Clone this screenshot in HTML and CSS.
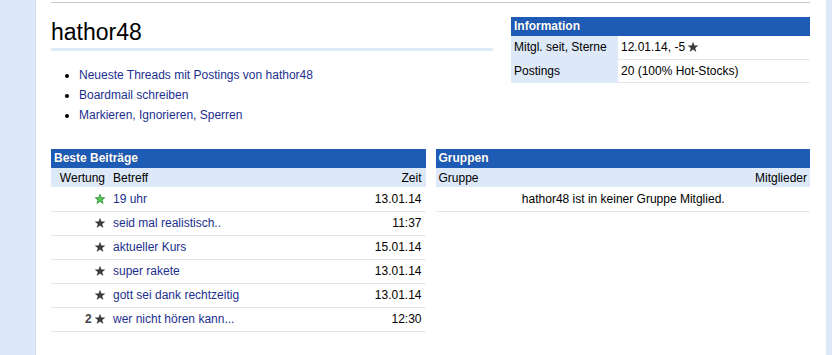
FILE: index.html
```html
<!DOCTYPE html>
<html lang="de">
<head>
    <meta charset="UTF-8">
    <title>hathor48 - Profil</title>
    <link rel="stylesheet" href="styles.css">
</head>
<body>
    <div class="page">
        <div class="rail rail-left"></div>

        <div class="content">
            <div class="rule"></div>

            <div class="top">
                <div class="profile">
                    <h1>hathor48</h1>
                    <ul class="actions">
                        <li><a href="#">Neueste Threads mit Postings von hathor48</a></li>
                        <li><a href="#">Boardmail schreiben</a></li>
                        <li><a href="#">Markieren, Ignorieren, Sperren</a></li>
                    </ul>
                </div>

                <!-- Information -->
                <div class="box box-info">
                    <div class="box-title">Information</div>
                    <table class="info-table">
                        <tr>
                            <td class="label">Mitgl. seit, Sterne</td>
                            <td>12.01.14, -5 <svg class="star" viewBox="0 0 10 10"><path d="M5 0.4 L6.25 3.7 L9.7 3.75 L6.95 5.9 L7.95 9.4 L5 7.35 L2.05 9.4 L3.05 5.9 L0.3 3.75 L3.75 3.7 Z"/></svg></td>
                        </tr>
                        <tr>
                            <td class="label">Postings</td>
                            <td>20 (100% Hot-Stocks)</td>
                        </tr>
                    </table>
                </div>
            </div>

            <div class="bottom">
                <!-- Beste Beitraege -->
                <div class="box">
                    <div class="box-title">Beste Beiträge</div>
                    <table class="list-table">
                        <tr class="head">
                            <td class="rating">Wertung</td>
                            <td>Betreff</td>
                            <td class="time">Zeit</td>
                        </tr>
                        <tr>
                            <td class="rating"><svg class="star star-green" viewBox="0 0 10 10"><path d="M5 0.4 L6.25 3.7 L9.7 3.75 L6.95 5.9 L7.95 9.4 L5 7.35 L2.05 9.4 L3.05 5.9 L0.3 3.75 L3.75 3.7 Z"/></svg></td>
                            <td><a href="#">19 uhr</a></td>
                            <td class="time">13.01.14</td>
                        </tr>
                        <tr>
                            <td class="rating"><svg class="star" viewBox="0 0 10 10"><path d="M5 0.4 L6.25 3.7 L9.7 3.75 L6.95 5.9 L7.95 9.4 L5 7.35 L2.05 9.4 L3.05 5.9 L0.3 3.75 L3.75 3.7 Z"/></svg></td>
                            <td><a href="#">seid mal realistisch..</a></td>
                            <td class="time">11:37</td>
                        </tr>
                        <tr>
                            <td class="rating"><svg class="star" viewBox="0 0 10 10"><path d="M5 0.4 L6.25 3.7 L9.7 3.75 L6.95 5.9 L7.95 9.4 L5 7.35 L2.05 9.4 L3.05 5.9 L0.3 3.75 L3.75 3.7 Z"/></svg></td>
                            <td><a href="#">aktueller Kurs</a></td>
                            <td class="time">15.01.14</td>
                        </tr>
                        <tr>
                            <td class="rating"><svg class="star" viewBox="0 0 10 10"><path d="M5 0.4 L6.25 3.7 L9.7 3.75 L6.95 5.9 L7.95 9.4 L5 7.35 L2.05 9.4 L3.05 5.9 L0.3 3.75 L3.75 3.7 Z"/></svg></td>
                            <td><a href="#">super rakete</a></td>
                            <td class="time">13.01.14</td>
                        </tr>
                        <tr>
                            <td class="rating"><svg class="star" viewBox="0 0 10 10"><path d="M5 0.4 L6.25 3.7 L9.7 3.75 L6.95 5.9 L7.95 9.4 L5 7.35 L2.05 9.4 L3.05 5.9 L0.3 3.75 L3.75 3.7 Z"/></svg></td>
                            <td><a href="#">gott sei dank rechtzeitig</a></td>
                            <td class="time">13.01.14</td>
                        </tr>
                        <tr>
                            <td class="rating"><b class="count">2</b> <svg class="star" viewBox="0 0 10 10"><path d="M5 0.4 L6.25 3.7 L9.7 3.75 L6.95 5.9 L7.95 9.4 L5 7.35 L2.05 9.4 L3.05 5.9 L0.3 3.75 L3.75 3.7 Z"/></svg></td>
                            <td><a href="#">wer nicht hören kann...</a></td>
                            <td class="time">12:30</td>
                        </tr>
                    </table>
                </div>

                <!-- Gruppen -->
                <div class="box">
                    <div class="box-title">Gruppen</div>
                    <table class="list-table">
                        <tr class="head">
                            <td class="group">Gruppe</td>
                            <td class="members">Mitglieder</td>
                        </tr>
                        <tr>
                            <td class="empty" colspan="2">hathor48 ist in keiner Gruppe Mitglied.</td>
                        </tr>
                    </table>
                </div>
            </div>
        </div>

        <div class="rail rail-right"></div>
    </div>
</body>
</html>
```

FILE: styles.css
```css
* {
    margin: 0;
    padding: 0;
    box-sizing: border-box;
}

body {
    font-family: 'Liberation Sans', Arial, sans-serif;
    font-size: 12px;
    color: #000;
    background-color: #fff;
}

a {
    color: #1c2f8e;
    text-decoration: none;
}

.page {
    display: flex;
    min-height: 355px;
}

.rail {
    background-color: #dde8f8;
}

.rail-left {
    width: 36px;
    border-right: 1px solid #d2dff2;
}

.rail-right {
    width: 6px;
}

.content {
    flex: 1;
    padding: 0 16px 0 15px;
}

.rule {
    margin-top: 2px;
    border-top: 1px solid #c8c8c8;
}

.top {
    display: flex;
    gap: 18px;
    margin-top: 14px;
}

.profile {
    flex: 1;
}

h1 {
    font-size: 23px;
    font-weight: normal;
    line-height: 28px;
    padding: 1px 0 2px;
    border-bottom: 3px solid #dde8f8;
}

.actions {
    margin-top: 14px;
    padding-left: 28px;
}

.actions li {
    line-height: 20px;
}

.box-info {
    width: 299px;
}

.box-title {
    background-color: #1e5bb5;
    color: #fff;
    font-weight: bold;
    height: 19px;
    line-height: 18px;
    padding: 0 3px;
    text-shadow: 0 0 1px rgba(0, 0, 0, 0.35);
}

table {
    width: 100%;
    border-collapse: collapse;
}

td {
    height: 24px;
    padding: 0 3px;
    border-bottom: 1px solid #e6e6e6;
    vertical-align: middle;
    white-space: nowrap;
}

.info-table td {
    height: 23px;
}

.info-table .label {
    width: 107px;
    background-color: #dde8f8;
    border-bottom-color: #dde8f8;
}

.bottom {
    display: flex;
    gap: 10px;
    margin-top: 24px;
}

.bottom .box {
    flex: 1;
}

.list-table .head td {
    height: 19px;
    background-color: #dde8f8;
    border-bottom: none;
}

.list-table .rating {
    width: 58px;
    text-align: right;
    padding-right: 4px;
}

.list-table td {
    padding-left: 4px;
}

.list-table .time {
    text-align: right;
    padding-right: 4px;
}

.list-table .group {
    padding-left: 3px;
}

.list-table .members {
    text-align: right;
    padding-right: 3px;
}

.list-table .empty {
    text-align: center;
}

.count {
    color: #444;
}

.star {
    width: 10px;
    height: 10px;
    vertical-align: -1px;
    fill: #3b3b3b;
    stroke: #222;
    stroke-width: 0.4;
}

.star-green {
    fill: #5ec65e;
    stroke: #1f8f1f;
    stroke-width: 0.8;
}
```
